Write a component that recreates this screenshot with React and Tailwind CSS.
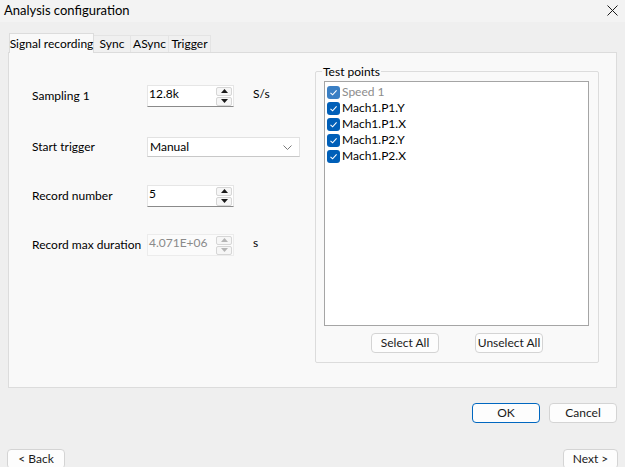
import React from 'react';

const points = [
  { label: 'Speed 1', disabled: true },
  { label: 'Mach1.P1.Y' },
  { label: 'Mach1.P1.X' },
  { label: 'Mach1.P2.Y' },
  { label: 'Mach1.P2.X' },
];

const tabs = ['Sync', 'ASync', 'Trigger'];
const tabWidths = ['w-[37px]', 'w-[38px]', 'w-[42px]'];

function Arrow({ up, disabled }) {
  return (
    <svg width="7" height="4" viewBox="0 0 7 4">
      <polygon
        points={up ? '0,4 7,4 3.5,0' : '0,0 7,0 3.5,4'}
        fill={disabled ? '#b5b5b5' : '#1a1a1a'}
      />
    </svg>
  );
}

function SpinBox({ value, disabled }) {
  return (
    <div
      className={`flex items-center w-[87px] h-[22px] border ${
        disabled ? 'bg-[#fbfbfb] border-[#ececec]' : 'bg-white border-[#e6e6e6] border-b-[#8a8a8a]'
      }`}
    >
      <span className={`flex-1 pl-[1px] -mt-[5px] ${disabled ? 'text-[#8a8a8a]' : 'text-black'}`}>{value}</span>
      <div className="flex flex-col gap-[1px] mr-[1px]">
        <div className="w-[16px] h-[9px] flex items-center justify-center border border-[#d6d6d6] bg-[#f6f6f6] rounded-[2px]">
          <Arrow up disabled={disabled} />
        </div>
        <div className="w-[16px] h-[9px] flex items-center justify-center border border-[#d6d6d6] bg-[#f6f6f6] rounded-[2px]">
          <Arrow disabled={disabled} />
        </div>
      </div>
    </div>
  );
}

function Row({ label, className, children }) {
  return (
    <div className={`flex items-center ${className}`}>
      <span className="w-[115px] shrink-0">{label}</span>
      {children}
    </div>
  );
}

function Check({ faded }) {
  return (
    <span
      className={`w-[13px] h-[13px] rounded-[3px] flex items-center justify-center shrink-0 ${
        faded ? 'bg-[#3a7fc4]' : 'bg-[#005fb8]'
      }`}
    >
      <svg width="9" height="9" viewBox="0 0 9 9">
        <path d="M1.5 4.8 L3.6 6.8 L7.6 2.3" fill="none" stroke="white" strokeWidth="1.1" />
      </svg>
    </span>
  );
}

function Btn({ children, className }) {
  return (
    <button
      className={`h-[20px] bg-[#fdfdfd] border border-[#d4d4d4] rounded-[4px] flex items-center justify-center text-[#1a1a1a] ${className}`}
    >
      {children}
    </button>
  );
}

export default function App() {
  return (
    <div className="w-[625px] h-[467px] bg-[#efefef] overflow-hidden text-[12px] text-black font-['Lato',sans-serif]">
      {/* Title bar */}
      <div className="h-[22px] bg-[#f3f3f3] flex items-center justify-between pl-[4px] pr-[7px]">
        <span className="text-[13px]">Analysis configuration</span>
        <svg width="11" height="11" viewBox="0 0 11 11" className="-mt-[2px]">
          <path d="M0.5 0.5 L10.5 10.5 M10.5 0.5 L0.5 10.5" stroke="#1a1a1a" strokeWidth="1" />
        </svg>
      </div>

      <div className="px-[8px] pt-[11px]">
        {/* Tabs */}
        <div className="flex items-end pl-[1px] h-[19px]">
          <div className="w-[85px] h-[20px] bg-[#f9f9f9] border border-b-0 border-[#dcdcdc] flex items-center justify-center whitespace-nowrap relative z-10 -mb-[1px]">
            Signal recording
          </div>
          {tabs.map((t, i) => (
            <div
              key={t}
              className={`${tabWidths[i]} h-[17px] bg-[#f0f0f0] border border-b-0 border-l-0 border-[#e4e4e4] flex items-center justify-center`}
            >
              {t}
            </div>
          ))}
        </div>

        {/* Panel */}
        <div className="w-[609px] h-[336px] bg-[#f9f9f9] border border-[#dcdcdc] flex">
          <div className="w-[306px] pl-[23px] pt-[32px]">
            <Row label="Sampling 1" className="h-[22px]">
              <SpinBox value="12.8k" />
              <span className="ml-[19px] -mt-[4px]">S/s</span>
            </Row>
            <Row label="Start trigger" className="h-[20px] mt-[30px]">
              <div className="w-[153px] h-[20px] bg-white border border-[#e2e2e2] border-b-[#c8c8c8] flex items-center justify-between pl-[2px] pr-[7px]">
                <span>Manual</span>
                <svg width="9" height="5" viewBox="0 0 9 5">
                  <path d="M0.5 0.5 L4.5 4.5 L8.5 0.5" fill="none" stroke="#7a7a7a" strokeWidth="1" />
                </svg>
              </div>
            </Row>
            <Row label="Record number" className="h-[22px] mt-[28px]">
              <SpinBox value="5" />
            </Row>
            <Row label="Record max duration" className="h-[22px] mt-[27px]">
              <SpinBox value="4.071E+06" disabled />
              <span className="ml-[19px] -mt-[4px]">s</span>
            </Row>
          </div>

          {/* Test points group */}
          <div className="mt-[18px] w-[284px] h-[292px] border border-[#dcdcdc] rounded-[2px] relative flex flex-col items-center">
            <span className="absolute -top-[9px] left-[6px] bg-[#f9f9f9] px-[1px]">Test points</span>
            <div className="mt-[9px] ml-[-1px] w-[265px] h-[245px] bg-white border border-[#a5a5a5] pt-[2px] pl-[2px]">
              {points.map((p) => (
                <div key={p.label} className="flex items-center h-[16px] gap-[2px]">
                  <Check faded={p.disabled} />
                  <span className={p.disabled ? 'text-[#8c8c8c]' : 'text-black'}>{p.label}</span>
                </div>
              ))}
            </div>
            <div className="flex gap-[36px] mt-[7px]">
              <Btn className="w-[68px]">Select All</Btn>
              <Btn className="w-[68px]">Unselect All</Btn>
            </div>
          </div>
        </div>

        {/* OK / Cancel */}
        <div className="flex justify-end gap-[9px] mt-[15px]">
          <Btn className="w-[68px] !border-[#0067c0]">OK</Btn>
          <Btn className="w-[68px]">Cancel</Btn>
        </div>
      </div>

      {/* Back / Next */}
      <div className="flex justify-between pl-[7px] pr-[7px] mt-[26px]">
        <Btn className="w-[58px]">&lt; Back</Btn>
        <Btn className="w-[55px]">Next &gt;</Btn>
      </div>
    </div>
  );
}
